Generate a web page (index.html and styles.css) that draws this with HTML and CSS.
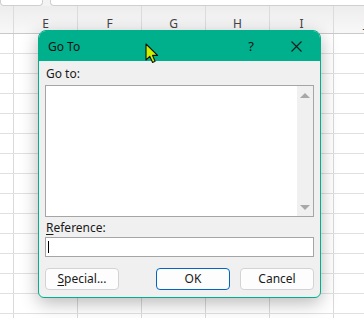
FILE: index.html
```html
<!DOCTYPE html>
<html lang="en">
<head>
    <meta charset="UTF-8">
    <title>Go To</title>
    <link rel="stylesheet" href="styles.css">
</head>
<body>
<div class="app">
    <div class="topbar">
        <div class="name_box"></div>
        <div class="formula_box"></div>
    </div>
    <div class="col_header">
        <div class="col_cell first"></div>
        <div class="col_cell">E</div>
        <div class="col_cell">F</div>
        <div class="col_cell">G</div>
        <div class="col_cell">H</div>
        <div class="col_cell">I</div>
        <div class="col_cell">J</div>
    </div>
    <div class="sheet"></div>

    <div class="dialog">
        <div class="titlebar">
            <span class="title">Go To</span>
            <span class="help">?</span>
            <span class="close">
                <svg width="11" height="11" viewBox="0 0 11 11"><path d="M0.5 0.5 L10.5 10.5 M10.5 0.5 L0.5 10.5" stroke="#1a1a1a" stroke-width="1.1" fill="none"/></svg>
            </span>
        </div>
        <div class="dialog_body">
            <div class="label">Go to:</div>
            <div class="listbox">
                <div class="list_items"></div>
                <div class="scrollbar">
                    <span class="arrow up"></span>
                    <span class="arrow down"></span>
                </div>
            </div>
            <div class="label ref_label"><u>R</u>eference:</div>
            <div class="ref_input"><span class="caret"></span></div>
            <div class="btn_area">
                <div class="btn"><u>S</u>pecial...</div>
                <div class="btn btn_ok">OK</div>
                <div class="btn">Cancel</div>
            </div>
        </div>
    </div>

    <svg class="pointer" width="15" height="21" viewBox="0 0 15 21">
        <path d="M1 1 L1 17 L4.8 13.4 L7.6 19.4 L10.1 18.3 L7.5 12.4 L12.6 12.4 Z" fill="#c8f000" stroke="#111" stroke-width="1.1" stroke-linejoin="round"/>
    </svg>
</div>
</body>
</html>
```

FILE: styles.css
```css
html, body{
    margin: 0;
    padding: 0;
}
body{
    width: 364px;
    height: 318px;
    overflow: hidden;
    font-family: "Noto Sans", "Open Sans", sans-serif;
    font-size: 12px;
    color: #1a1a1a;
}
.app{
    position: relative;
    width: 364px;
    height: 318px;
    background-color: #ffffff;
}

/* spreadsheet behind the dialog */
.topbar{
    display: flex;
    gap: 7px;
    height: 6px;
    background-color: #f3f3f3;
}
.topbar>.name_box{
    width: 43px;
    box-sizing: border-box;
    background-color: #ffffff;
    border: 1px solid #cfcfcf;
    border-top: 0;
    border-radius: 0 0 4px 4px;
}
.topbar>.formula_box{
    flex: 1;
    box-sizing: border-box;
    background-color: #ffffff;
    border: 1px solid #cfcfcf;
    border-top: 0;
    border-right: 0;
    border-radius: 0 0 0 4px;
}
.col_header{
    display: flex;
    height: 27px;
    background: linear-gradient(#ededed, #f8f8f8);
    border-bottom: 1px solid #c9c9c9;
    overflow: hidden;
}
.col_header>.col_cell{
    flex: 0 0 64px;
    box-sizing: border-box;
    border-right: 1px solid #dcdcdc;
    text-align: center;
    line-height: 35px;
    font-size: 12px;
    color: #444444;
}
.col_header>.col_cell.first{
    flex-basis: 14px;
}
.sheet{
    height: 284px;
    background-color: #ffffff;
    background-image:
        linear-gradient(to bottom, transparent 19px, #e1e1e1 19px),
        linear-gradient(to right, transparent 63px, #dadada 63px);
    background-size: 100% 20px, 64px 100%;
    background-position: 0 0, 14px 0;
}

/* dialog */
.dialog{
    position: absolute;
    left: 38px;
    top: 30px;
    width: 283px;
    height: 268px;
    box-sizing: border-box;
    display: flex;
    flex-direction: column;
    background-color: #f0f0f0;
    border: 1px solid #00af8c;
    border-radius: 8px 8px 6px 6px;
    box-shadow: 0 5px 18px rgba(0, 0, 0, 0.28);
    overflow: hidden;
}
.dialog>.titlebar{
    display: flex;
    align-items: center;
    height: 30px;
    flex: 0 0 30px;
    background-color: #00b08c;
    padding: 0 0 0 9px;
}
.titlebar>.title{
    flex: 1;
    font-size: 12px;
    color: #111111;
}
.titlebar>.help{
    width: 20px;
    text-align: center;
    font-size: 13px;
    color: #111111;
    margin-right: 24px;
}
.titlebar>.close{
    width: 22px;
    display: flex;
    justify-content: center;
    margin-right: 13px;
}
.titlebar>.close>svg{
    display: block;
}
.dialog_body{
    flex: 1;
    display: flex;
    flex-direction: column;
    padding: 5px 6px 7px 6px;
}
.dialog_body>.label{
    line-height: 16px;
    height: 16px;
    font-size: 12px;
    padding-left: 1px;
    margin-bottom: 3px;
}
.dialog_body>.label u{
    text-underline-offset: 2px;
}
.dialog_body>.ref_label{
    margin-top: 3px;
    margin-bottom: 1px;
}
.listbox{
    display: flex;
    height: 132px;
    box-sizing: border-box;
    background-color: #ffffff;
    border: 1px solid #a5a5a5;
}
.listbox>.list_items{
    flex: 1;
}
.listbox>.scrollbar{
    width: 16px;
    display: flex;
    flex-direction: column;
    justify-content: space-between;
    align-items: center;
    padding: 7px 0 6px 0;
    background-color: #f0f0f0;
}
.scrollbar>.arrow{
    width: 0;
    height: 0;
    border-left: 5px solid transparent;
    border-right: 5px solid transparent;
}
.scrollbar>.arrow.up{
    border-bottom: 5px solid #a8a8a8;
}
.scrollbar>.arrow.down{
    border-top: 5px solid #a8a8a8;
}
.ref_input{
    height: 20px;
    box-sizing: border-box;
    background-color: #ffffff;
    border: 1px solid #a5a5a5;
    padding: 3px 0 0 2px;
}
.ref_input>.caret{
    display: block;
    width: 1px;
    height: 12px;
    background-color: #000000;
}
.btn_area{
    display: flex;
    gap: 10px;
    margin-top: 11px;
}
.btn{
    width: 74px;
    height: 22px;
    box-sizing: border-box;
    line-height: 20px;
    text-align: center;
    font-size: 12px;
    background-color: #fdfdfd;
    border: 1px solid #d3d3d3;
    border-radius: 4px;
}
.btn u{
    text-underline-offset: 2px;
}
.btn_ok{
    margin-left: auto;
    border-color: #0067c0;
}

.pointer{
    position: absolute;
    left: 145px;
    top: 43px;
}
```
